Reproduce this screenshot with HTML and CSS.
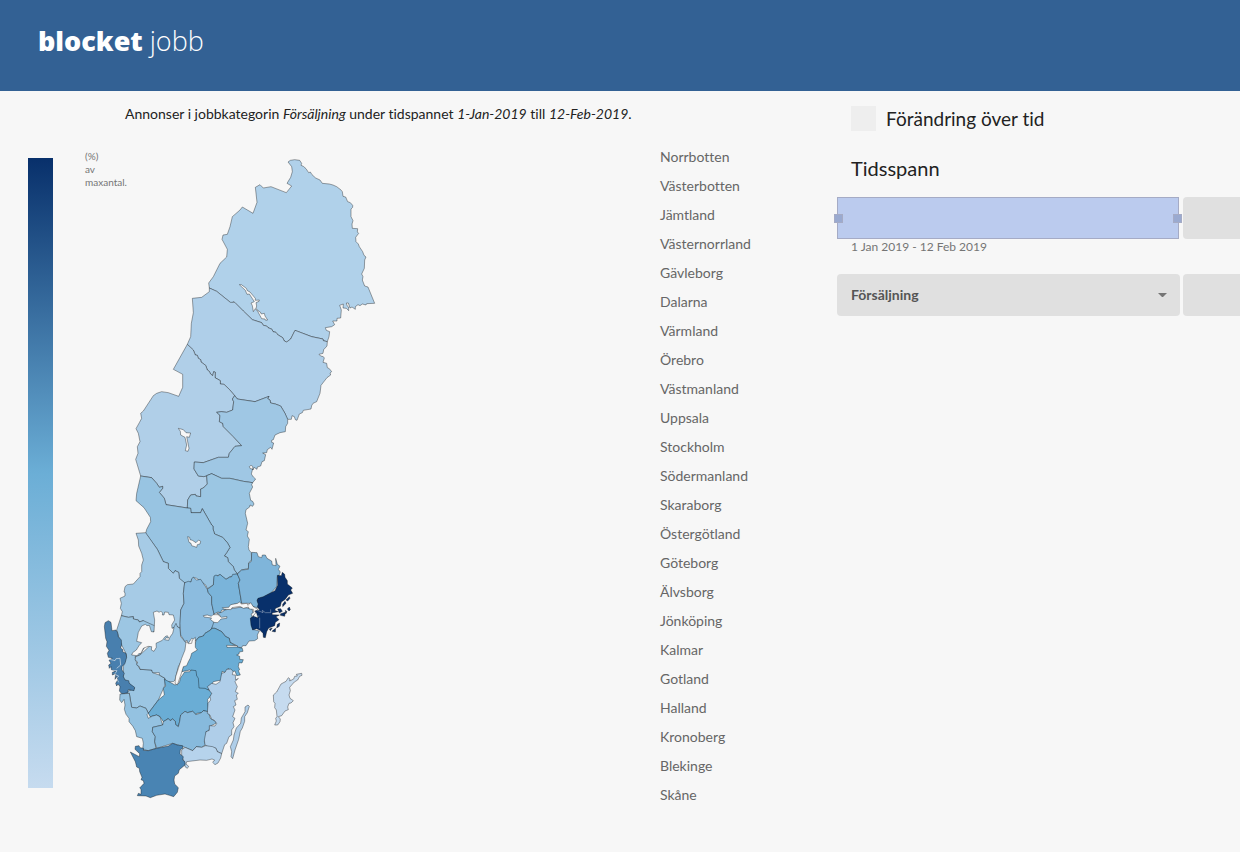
FILE: index.html
```html
<!DOCTYPE html>
<html lang="sv">
<head>
<meta charset="utf-8">
<title>Blocket Jobb</title>
<link rel="stylesheet" href="styles.css">
</head>
<body>
<header class="header">
  <a class="logo" href="#"><strong>blocket</strong><span>jobb</span></a>
</header>
<main class="content">
  <section class="overview">
    <p class="summary">Annonser i jobbkategorin <em>Försäljning</em> under tidspannet <em>1-Jan-2019</em> till <em>12-Feb-2019</em>.</p>
    <div class="chart">
      <div class="scale"></div>
      <p class="unit">(%) av maxantal.</p>
      <svg class="map" viewBox="300 450 840 1965" role="img" aria-label="Karta över Sveriges län">
        <g transform="translate(510 450)">
          <path fill="#b0d1ea" d="M354 36L361 31 374 29 389 31 395 40 393 46 400 49 408 56 416 68 421 66 426 74 437 84 450 90 457 100 478 102 489 105 500 110 512 119 517 125 519 139 527 141 533 155 541 158 548 166 548 172 543 177 543 200 549 212 546 222 547 235 563 236 562 246 566 250 557 262 558 275 565 282 568 290 578 305 582 316 588 321 584 330 583 355 575 372 579 380 577 390 584 408 594 411 614 460 590 461 588 465 577 462 570 467 564 464 556 470 556 478 546 471 540 474 535 459 529 459 531 467 536 471 536 482 529 475 519 474 520 462 509 466 514 480 512 504 501 505 501 513 488 513 494 524 485 530 466 533 469 541 479 545 477 560 472 575 460 572 459 567 425 560 375 541 362 567 350 576 343 573 338 563 323 554 318 547 309 545 306 538 294 533 290 528 280 526 275 518 247 509 220 483 194 457 189 455 187 459 181 457 140 424 118 414 116 399 130 380 150 340 170 321 172 298 156 268 159 255 172 253 180 230 187 200 210 180 217 171 249 190 261 157 256 112 270 104 280 114 303 110 349 128 365 108 351 100 362 82 367 65 365 50Z"/>
          <path class="lake" d="M208 404L214 404 229 415 232 422 240 426 256 445 256 451 268 450 267 454 258 458 260 468 258 475 265 483 271 486 274 492 283 490 285 498 293 510 287 511 285 507 275 506 263 484 256 476 250 485 247 467 243 459 253 455 238 432 231 433 226 421Z"/>
        </g>
        <g transform="translate(360 990)">
          <path fill="#afcfe9" d="M268-126L290-116 331-83 344-83 370-57 397-31 425-22 430-14 440-12 444-7 456-2 459 5 468 7 473 14 488 23 493 33 500 36 512 27 525 1 575 20 609 27 610 32 622 35 621 48 611 59 609 70 597 73 602 78 610 80 613 84 609 97 620 100 622 113 628 116 635 125 630 129 632 135 621 143 603 166 600 190 590 215 579 220 575 227 573 237 550 241 547 248 538 252 531 271 526 269 523 260 516 257 514 268 503 268 498 258 495 250 482 228 466 222 452 219 450 210 443 206 447 199 405 215 352 207 344 197 328 178 312 163 301 162 301 152 285 143 286 127 281 125 278 137 271 131 268 124 262 120 257 106 243 96 242 89 235 85 232 76 226 75 220 60 202 43 212 20 214-20 220-52 217-95 245-98 268-115Z"/>
          <path fill="#b0cfe8" d="M202 43L220 60 226 75 232 76 235 85 242 89 243 96 257 106 262 120 268 124 271 131 278 137 281 125 286 127 285 143 301 152 301 162 312 163 328 178 344 197 337 207 341 215 338 240 320 247 304 245 290 247 300 256 298 275 308 280 310 290 340 320 365 347 345 349 328 370 325 382 295 382 250 398 223 396 222 417 235 438 252 440 260 437 262 462 250 474 242 477 242 500 228 498 226 493 212 495 203 510 202 534 138 524 133 505 118 487 128 475 128 469 118 472 110 460 95 443 62 438 47 388 54 370 52 350 60 335 55 310 48 296 58 278 65 265 62 250 70 243 100 197 110 190 125 185 145 188 176 199 188 172 188 133 160 118Z"/>
          <path class="lake" d="M175 295L190 299 198 308 212 309 210 315 208 322 200 320 207 355 204 364 196 362 200 345 195 322 182 315 181 304Z"/>
          <path fill="#9fc7e4" d="M344 197L352 207 405 215 447 199 443 206 450 210 452 219 466 222 482 228 495 250 503 268 503 280 497 290 496 305 480 308 465 315 460 329 455 331 455 337 461 339 456 358 452 352 442 359 440 368 428 369 437 374 433 392 426 395 422 408 412 411 411 418 402 412 399 420 398 409 393 406 388 410 391 416 398 417 394 432 400 441 407 447 398 458 370 454 330 445 305 445 275 431 260 437 252 440 235 438 222 417 223 396 250 398 295 382 325 382 328 370 345 349 365 347 340 320 310 290 308 280 298 275 300 256 290 247 304 245 320 247 338 240 341 215 337 207Z"/>
        </g>
        <g transform="translate(360 1380)">
          <path fill="#9bc6e3" d="M260 47L275 41 305 55 330 55 370 64 398 68 395 74 398 81 388 100 392 121 398 124 402 132 398 139 390 135 389 141 378 149 376 160 383 190 378 210 385 215 382 228 388 238 385 260 387 270 394 278 395 300 386 308 386 325 365 330 352 341 343 330 340 320 325 305 323 293 313 288 320 278 330 262 322 248 308 232 284 222 279 207 279 198 275 195 247 146 242 158 213 158 212 145 202 144 203 120 212 105 226 103 228 108 242 110 242 87 250 84 262 72Z"/>
          <path fill="#98c4e2" d="M62 48L95 53 110 70 118 82 128 79 128 85 118 97 133 115 138 134 202 144 212 145 213 158 242 158 247 146 275 195 279 198 279 207 284 222 308 232 322 248 330 262 320 278 313 288 323 293 325 305 340 320 343 330 352 341 340 345 338 351 330 350 318 358 300 344 283 350 280 375 262 386 258 376 240 362 230 355 220 352 212 367 192 368 178 355 176 337 165 332 160 340 145 325 145 310 130 305 112 268 77 220 80 208 92 185 91 172 72 143 48 122 50 100Z"/>
          <path class="lake" d="M203 230L209 232 210 239 217 241 228 248 236 240 242 244 240 252 232 254 230 262 215 257 213 250 207 247Z"/>
        </g>
        <g transform="translate(270 1680)">
          <path fill="#a6cbe6" d="M138-80L167-82 202-32 220 5 235 10 235 25 250 40 255 32 266 37 268 55 284 68 280 100 282 130 272 150 270 205 262 200 250 205 160 200 160 182 148 186 145 180 130 177 130 170 115 172 94 167 97 155 91 145 94 130 90 115 105 108 105 98 102 96 105 80 112 74 130 72 150 50 150 40 155 35 155 15 160 0 155-20 146-42 145-60Z"/>
          <path fill="#9cc6e3" d="M94 167L115 172 130 170 130 177 145 180 148 186 160 182 200 200 150 285 135 290 140 310 150 328 185 330 188 338 208 345 225 355 225 375 205 420 190 440 175 460 168 445 150 438 140 444 125 442 118 400 100 400 134 385 100 355 100 320 110 285 90 245 80 210Z"/>
          <path fill="#9fc8e5" d="M262 200L270 205 272 230 290 250 288 275 265 320 255 360 250 365 228 365 225 355 208 345 208 338 188 338 185 330 150 328 148 320 140 315 143 306 135 300 137 290 150 285 198 240 250 205 258 190Z"/>
          <path class="lake" d="M190 157L201 153 208 157 212 153 218 159 217 165 222 165 224 156 235 157 237 164 250 165 254 180 245 195 246 205 252 203 248 220 240 231 236 241 224 239 228 233 236 234 232 227 225 230 217 241 198 250 199 262 192 274 184 270 185 260 174 259 160 265 153 280 146 281 142 287 125 285 128 278 139 270 147 257 155 248 140 244 145 217 155 198 166 193 171 197 178 196 184 215 192 216 194 180Z"/>
          <path fill="#487fae" d="M43 200L45 188 55 182 63 187 66 212 78 210 83 218 85 230 94 240 95 255 92 264 99 269 98 275 108 280 110 292 105 310 96 320 96 330 103 340 100 349 105 360 116 362 118 370 134 382 132 392 115 389 113 398 96 402 88 393 90 380 84 372 80 378 77 370 83 360 80 350 75 358 77 341 67 345 67 337 76 334 64 329 63 320 58 325 56 315 63 310 57 301 67 295 55 292 52 280 57 271 49 259 51 245 47 235Z"/>
          <path class="channel" d="M59 298L75 302 78 296 90 295 92 315 80 325M66 331L81 332 74 343 86 348 80 355 86 367"/>
        </g>
        <g transform="translate(570 1680)">
          <path fill="#8cbcdf" d="M-16 68L-5 64 3 66 5 56 10 52 20 60 32 58 52 88 55 98 65 110 65 130 72 160 72 185 75 190 62 210 45 220 40 228 26 232 18 242 5 235-5 250-10 240-15 245-28 225-30 190-28 150-18 130-20 100Z"/>
          <path fill="#7ab4da" d="M52 88L70 75 72 48 78 45 84 48 90 43 108 58 118 52 125 50 128 43 142 42 150 60 145 70 150 100 155 130 135 132 120 140 105 150 95 150 92 158 84 156 72 162 65 130 65 110 55 98Z"/>
          <path fill="#7fb5da" d="M142 42L155 30 175 28 176 10 184 4 185-23 201-22 205-10 215-7 217-15 226-15 231-5 245 3 247 15 258 17 257-5 262 13 270 19 265 28 271 36 267 46 262 50 260 80 242 100 220 112 202 118 208 145 190 140 180 130 155 130 150 100 145 70 150 60Z"/>
          <path fill="#8bbcdf" d="M72 185L92 177 90 166 80 160 95 157 105 150 130 145 150 142 185 145 190 160 183 175 188 208 208 213 202 225 203 236 194 242 177 243 168 257 158 257 155 263 145 262 137 255 120 247 118 235 106 229 95 215 75 205 65 205Z"/>
          <path fill="#6aadd5" d="M65 205L75 205 95 215 106 229 118 235 120 247 145 262 157 265 159 274 148 276 147 282 140 285 149 289 149 298 160 299 156 309 147 308 145 320 149 329 145 332 151 345 140 347 135 333 121 336 115 325 105 337 96 334 95 360 70 365 55 390 20 390 18 344 0 330-25 335-15 300 5 275 12 260 18 242 26 232 40 228 45 220 62 210Z"/>
          <path class="lake" d="M97 143L116 142 122 134 143 130 148 126 155 132 170 130 174 136 182 128 190 140 203 148 196 160 188 170 183 162 190 158 190 148 178 147 175 141 160 145 150 139 126 143 122 149 101 147ZM40 167L52 165 64 169 69 164 84 164 94 172 111 170 110 175 93 177 83 188 72 187 61 178 65 174 42 171ZM110 256L142 257 143 261 111 262Z"/>
          <path fill="#08306b" d="M262 46L274 47 277 37 284 43 285 52 292 62 292 72 307 84 302 90 308 100 295 105 286 118 274 126 271 139 257 145 254 151 265 155 246 159 247 164 268 165 258 170 267 179 256 187 254 197 236 204 230 215 226 233 220 232 219 220 210 211 200 206 188 210 183 196 181 175 191 168 204 174 200 160 194 153 209 149 202 140 205 132 201 122 204 115 220 110 237 101 255 92 263 76Z"/>
          <path fill="#08306b" d="M288 120L298 110 300 115 293 123ZM278 133L285 124 288 130 278 140ZM263 147L272 146 277 154 268 159ZM272 161L286 157 284 169 271 166ZM292 147L298 141 301 149 297 153ZM286 151L291 155 287 162ZM262 193L269 189 268 199 260 204ZM250 210L257 205 256 216 246 214ZM238 207L247 204 241 212Z"/>
          <path class="channel light" d="M202 151L219 158 217 151 226 158 242 158 242 148M209 173L209 205M192 170L208 168"/>
        </g>
        <g transform="translate(270 2010)">
          <path fill="#6aadd5" d="M223 28L235 34 255 45 268 38 272 23 284 6 300 5 303 0 318 2 320 17 325 25 327 54 345 55 365 65 365 75 353 88 355 125 340 122 334 128 320 130 318 134 308 124 292 128 285 124 272 135 269 154 265 170 257 164 256 154 248 147 240 152 235 146 220 155 210 140 200 135 180 140 175 130 205 90 223 75 220 55 227 48Z"/>
          <path class="lake" d="M288-85L296-79 305-80 307-90 316-98 316-68 322-60 305-50 301-36 295-25 290-13 280-10 274 10 262 45 255 40 257 20 275-35 285-60Z"/>
          <path fill="#94c2e1" d="M90 72L118 70 121 90 125 112 140 114 150 108 168 115 175 130 171 134 175 145 188 138 200 135 210 140 218 165 188 172 187 185 196 200 194 215 198 235 175 242 158 238 160 220 157 205 140 200 136 182 128 168 117 155 117 145 108 133 103 118 105 105 102 88 95 98 89 90Z"/>
          <path fill="#87badd" d="M218 165L220 155 235 146 240 152 248 147 256 154 257 164 265 170 269 154 272 135 285 124 292 128 308 124 318 134 334 128 340 122 355 125 361 145 378 155 378 160 361 168 356 183 348 185 350 200 343 215 347 224 335 232 319 230 308 242 285 232 248 220 200 235 194 215 196 200 187 185 188 172Z"/>
        </g>
        <g transform="translate(540 1980)">
          <path fill="#afcee9" d="M82 80L95 70 108 73 120 65 125 40 135 37 140 28 153 27 159 34 157 44 166 45 167 60 175 55 165 65 172 80 166 95 175 100 169 105 172 118 164 122 168 135 160 140 165 150 158 170 165 175 159 188 162 200 155 210 155 225 147 230 140 250 134 254 125 281 112 275 108 265 88 262 75 255 73 240 78 215 88 211 88 197 105 198 110 190 102 180 95 178 90 165 82 160 84 130 92 120 90 110 95 100 90 94Z"/>
          <path fill="#b6d3ec" d="M5 270L15 262 38 272 49 260 65 262 77 257 98 260 108 265 112 275 125 281 122 294 114 309 105 314 98 307 104 300 96 297 80 301 60 300 20 305 18 312 26 319 22 325 15 320 14 308 5 290Z"/>
          <path fill="#afcee9" d="M195 141L204 135 208 139 202 158 194 170 194 184 187 204 181 214 176 238 165 270 158 296 153 290 155 275 151 260 160 240 162 225 169 204 182 190 184 174 195 155Z"/>
          <path fill="#c6dbef" d="M349 43L365 40 366 46 359 49 353 60 343 66 329 82 331 92 327 105 330 115 340 122 333 129 327 130 323 141 325 149 315 153 305 167 295 170 301 177 300 185 293 195 284 195 289 183 287 175 291 170 289 150 284 143 285 130 281 125 280 105 290 96 303 72 318 64 325 53 330 57 329 63 341 57 344 49 352 48Z"/>
        </g>
        <path fill="#4984b3" transform="translate(270 2010)" d="M121 246L148 260 149 251 135 238 136 229 147 227 150 233 161 235 160 241 175 242 200 235 235 228 248 220 262 225 278 227 279 235 271 239 270 252 280 260 278 270 285 275 285 285 268 299 265 310 254 318 252 330 254 342 265 353 262 367 251 380 238 376 225 372 200 376 181 383 168 378 142 377 145 370 153 373 153 358 149 354 162 340 160 332 153 329 156 322 149 305 148 295 140 291 136 275Z"/>
      </svg>
      <ul class="regions">
        <li>Norrbotten</li><li>Västerbotten</li><li>Jämtland</li><li>Västernorrland</li><li>Gävleborg</li><li>Dalarna</li><li>Värmland</li><li>Örebro</li><li>Västmanland</li><li>Uppsala</li><li>Stockholm</li><li>Södermanland</li><li>Skaraborg</li><li>Östergötland</li><li>Göteborg</li><li>Älvsborg</li><li>Jönköping</li><li>Kalmar</li><li>Gotland</li><li>Halland</li><li>Kronoberg</li><li>Blekinge</li><li>Skåne</li>
      </ul>
    </div>
  </section>
  <aside class="controls">
    <label class="toggle"><input type="checkbox"> Förändring över tid</label>
    <h2 class="heading">Tidsspann</h2>
    <div class="row">
      <div class="range"><span class="handle"></span><span class="handle"></span></div>
      <div class="block"></div>
    </div>
    <p class="dates">1 Jan 2019 - 12 Feb 2019</p>
    <div class="row">
      <div class="picker">
        <select aria-label="Jobbkategori"><option>Försäljning</option></select>
        <svg class="arrow" viewBox="0 0 10 5" aria-hidden="true"><path d="M0 0h10L5 5Z"/></svg>
      </div>
      <div class="block"></div>
    </div>
  </aside>
</main>
</body>
</html>
```
FILE: styles.css
```css
* { box-sizing: border-box; }
body {
  margin: 0;
  background: #f7f7f7;
  color: #222;
  font-family: Lato, sans-serif;
  font-size: 14px;
  font-variant-ligatures: none;
  overflow-x: hidden;
}
p, h2, ul { margin: 0; padding: 0; }
.header {
  background: #336194;
  padding: 21px 38px 30px;
}
.logo {
  display: flex;
  align-items: baseline;
  gap: 7px;
  color: #fff;
  font-family: "Open Sans", sans-serif;
  font-size: 27px;
  line-height: 40px;
  text-decoration: none;
}
.logo strong { font-weight: 800; }
.logo span { font-weight: 300; }
.content {
  display: grid;
  grid-template-columns: 27fr 13fr;
}
.summary {
  padding: 13px 0 0 125px;
  line-height: 20px;
}
.chart {
  display: grid;
  grid-template-columns: 25px 42px auto 1fr;
  align-items: start;
  padding: 26px 0 30px 28px;
}
.scale {
  height: 630px;
  margin-top: 8px;
  background: linear-gradient(#08306b, #6baed6 50%, #c6dbef);
}
.unit {
  margin-left: 32px;
  font-size: 10px;
  line-height: 13px;
  color: #757575;
  width: 10px;
}
.map {
  width: 280px;
  margin-left: 5px;
}
.map path {
  stroke: #000;
  stroke-opacity: .35;
  stroke-width: 3;
  stroke-linejoin: round;
}
.map .lake { fill: #f7f7f7; }
.map .channel { fill: none; stroke: #f7f7f7; stroke-opacity: .8; stroke-width: 2; }
.map .light { stroke-opacity: .5; }
.regions {
  justify-self: end;
  width: 177px;
  list-style: none;
  line-height: 29px;
  margin-top: -8px;
  color: #666;
}
.controls { padding-top: 15px; overflow: hidden; margin-left: -5px; padding-left: 5px; }
.toggle {
  display: flex;
  align-items: center;
  gap: 10px;
  margin-left: 14px;
  font-size: 19px;
  line-height: 25px;
}
.toggle input {
  appearance: none;
  width: 25px;
  height: 25px;
  margin: 0;
  background: #eee;
}
.heading {
  margin: 24px 0 16px 14px;
  font-size: 20px;
  font-weight: 400;
  line-height: 26px;
}
.row {
  display: grid;
  grid-template-columns: 343px 1fr;
  gap: 3px;
}
.block { background: #e0e0e0; border-radius: 4px 0 0 4px; }
.range {
  display: flex;
  justify-content: space-between;
  align-items: center;
  height: 42px;
  margin-right: 1px;
  background: #bbcbee;
  border: 1px solid #a5abc5;
}
.handle {
  width: 9px;
  height: 9px;
  margin: 0 -4px;
  background: #9aaad0;
  border: 1px solid #a5abc5;
}
.dates {
  margin: 0 0 19px 14px;
  font-size: 12px;
  line-height: 16px;
  color: #757575;
}
.picker {
  display: grid;
  align-items: center;
}
.picker > * { grid-area: 1 / 1; }
.picker select {
  appearance: none;
  width: 100%;
  height: 42px;
  padding: 0 14px 2px;
  border: 0;
  border-radius: 4px;
  background: #e0e0e0;
  color: #555;
  font: bold 14px Lato, sans-serif;
}
.arrow {
  width: 9px;
  justify-self: end;
  margin-right: 13px;
  fill: #757575;
  pointer-events: none;
}
```
